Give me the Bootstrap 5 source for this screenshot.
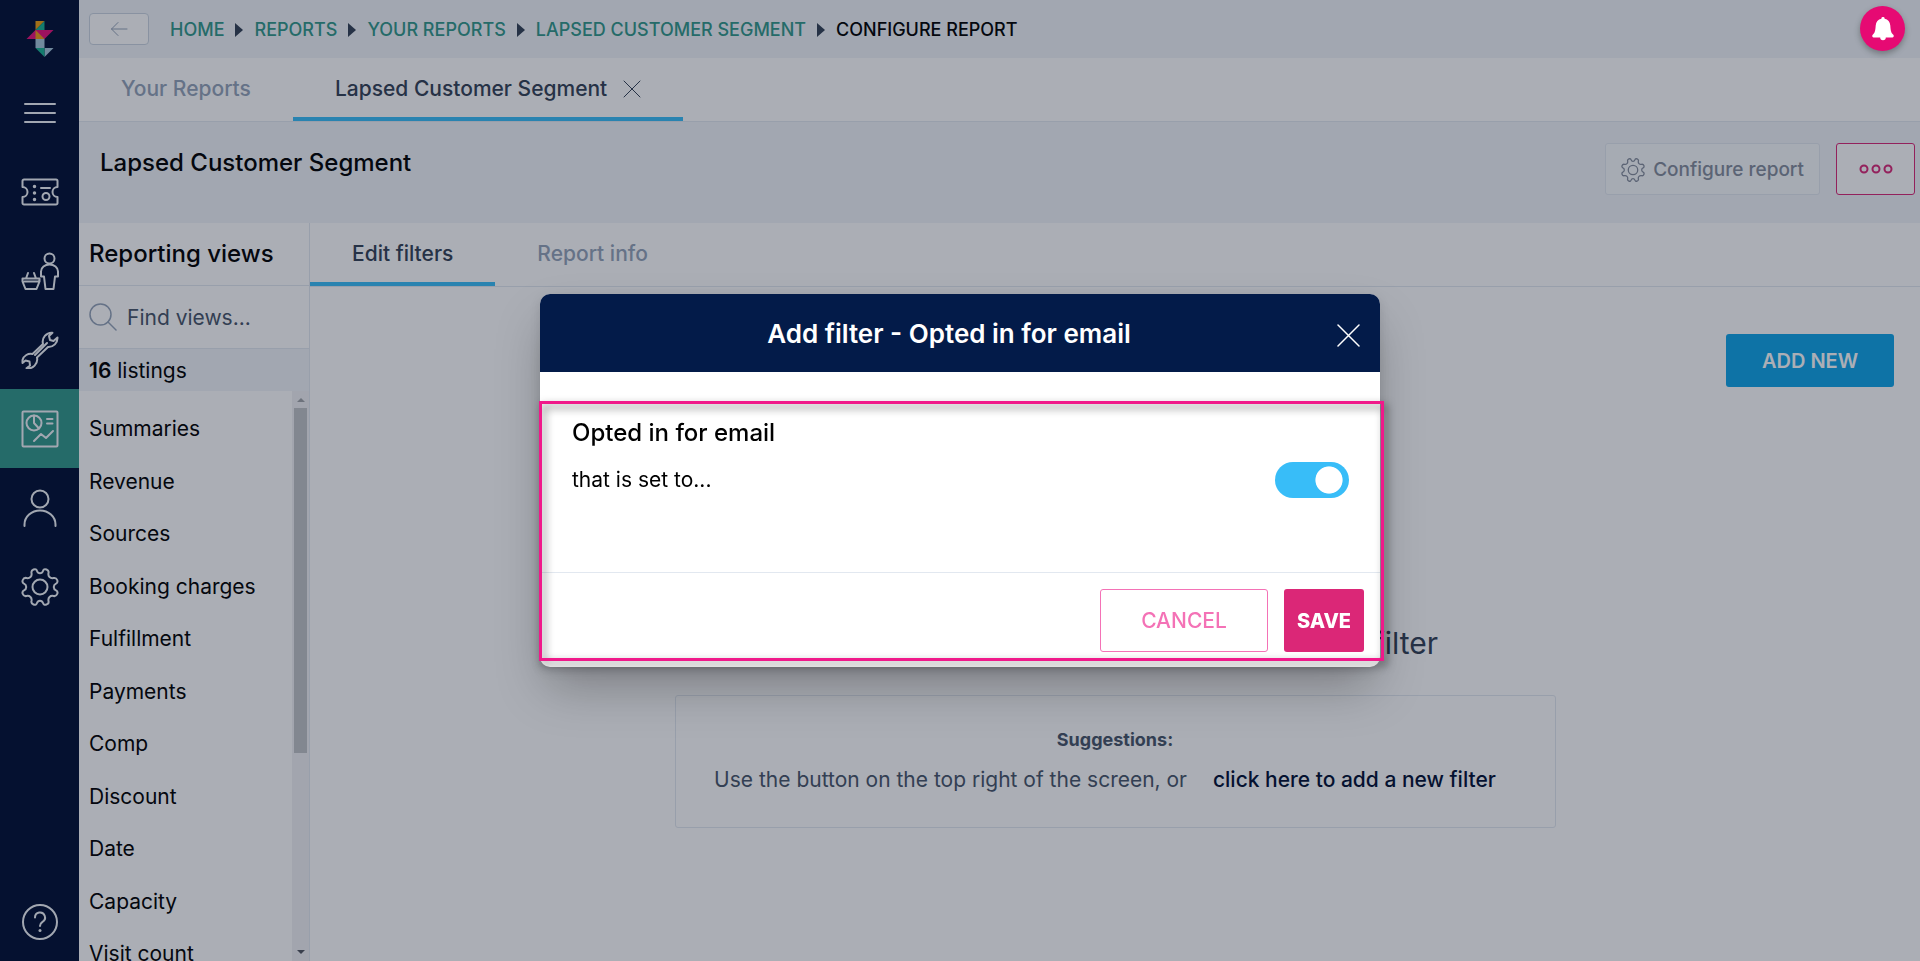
<!DOCTYPE html>
<html lang="en">
<head>
<meta charset="utf-8">
<meta name="viewport" content="width=device-width, initial-scale=1">
<title>Configure report</title>
<link href="https://cdn.jsdelivr.net/npm/bootstrap@5.3.0/dist/css/bootstrap.min.css" rel="stylesheet">
<style>
  :root {
    --navy: #000f33;
    --header-navy: #031b49;
    --green: #32988a;
    --sky: #38bdf8;
    --slate-100: #f1f5f9;
    --slate-200: #e2e8f0;
    --slate-400: #94a3b8;
    --slate-600: #475569;
    --slate-800: #334155;
    --pink: #db2777;
  }
  body { font-family: Inter, "Liberation Sans", sans-serif; font-size: 21px; line-height: 28px; color: #000; background: #fff; }
  a { text-decoration: none; color: inherit; }
  svg { display: block; flex: none; fill: none; stroke: currentColor; stroke-linecap: round; stroke-linejoin: round; }
  svg.solid { stroke: none; fill: currentColor; }
  h1, h2, h3, p, ul, ol { margin: 0; }
  .line-b { border-bottom: 1px solid var(--slate-200); }
  .title-text { font-size: 24px; line-height: 32px; font-weight: 500; }

  .rail { width: 79px; background: var(--navy); color: #f1f5f9; }
  .rail a, .rail button { height: 79px; width: 100%; color: inherit; background: none; border: 0; padding: 0; display: flex; align-items: center; justify-content: center; }
  .rail .brand-mark { height: 73px; padding-top: 4px; }
  .rail .current { background: var(--green); }

  .topbar { height: 58px; background: var(--slate-100); padding-left: 10px; }
  .back-btn { width: 60px; height: 32px; border: 1px solid #cbd5e1; border-radius: 4px; background: #fff; color: var(--slate-400); display: flex; align-items: center; justify-content: center; padding: 0; }
  .crumbs { font-size: 18px; font-weight: 500; color: var(--green); margin-left: 21px; padding: 2px 0 0; text-transform: uppercase; list-style: none; }
  .crumbs li + li::before { content: ""; display: block; margin: 0 11px; border: solid transparent; border-width: 7px 0 7px 8px; border-left-color: var(--slate-800); }
  .crumbs .here { color: #000; }

  .tabs { height: 64px; font-weight: 500; color: var(--slate-400); }
  .tabs .tab { display: flex; align-items: center; padding: 2px 42px 0; border-bottom: 4px solid transparent; }
  .tabs .tab.on { color: var(--slate-800); border-bottom-color: var(--sky); }
  .tabs button { background: none; border: 0; padding: 0; color: inherit; }

  .report-head { height: 101px; background: var(--slate-100); padding: 21px 5px 0 21px; }
  .head-btn { height: 52px; border-radius: 3px; font-size: 19px; font-weight: 500; }
  .config-btn { border: 1px solid var(--slate-200); background: #f8fafc; color: #848d9c; padding: 2px 15px 0; width: 215px; }
  .more-btn { width: 79px; border: 1px solid var(--pink); background: #fff; color: var(--pink); }

  .views { width: 231px; border-right: 1px solid var(--slate-200); }
  .views-title { height: 63px; padding-left: 10px; }
  .find { height: 63px; padding-left: 10px; color: var(--slate-400); }
  .find input { border: 0; outline: 0; width: 100%; padding: 2px 0 0; margin-left: 10px; background: none; color: var(--slate-600); }
  .find input::placeholder { color: var(--slate-600); opacity: 1; }
  .count { height: 42px; padding: 2px 0 0 10px; background: var(--slate-100); }
  .view-list { padding: 12px 0 0 10px; list-style: none; }
  .view-list li { height: 52px; display: flex; align-items: center; }
  .view-list li:nth-child(even) { height: 53px; }
  .scroll-track { width: 17px; background: #f1f2f4; padding: 7px 2px; gap: 6px; }
  .scroll-track::before, .scroll-track::after { content: ""; align-self: center; border: solid transparent; }
  .scroll-track::before { border-width: 0 4px 4px; border-bottom-color: #a0a3a8; }
  .scroll-track::after { border-width: 4px 4px 0; border-top-color: #505560; margin-top: auto; }
  .scroll-thumb { height: 62%; background: #c1c3c6; }

  .add-row { padding: 47px 26px 0; }
  .add-btn { width: 168px; height: 53px; background: #0ea5e9; color: #fff; border: 0; border-radius: 3px; font-size: 20px; font-weight: 600; }
  .empty-state { margin: auto 0 133px; }
  .empty-title { width: 646px; text-align: right; font-size: 30px; line-height: 40px; color: var(--slate-800); }
  .suggest { border: 1px solid var(--slate-200); border-radius: 3px; padding: 30px 34px 33px; color: var(--slate-600); min-width: 881px; }
  .suggest h3 { font-size: 18px; line-height: 28px; font-weight: 700; }
  .suggest a { color: var(--navy); font-weight: 500; margin: 0 20px; }

  .bell-btn { width: 45px; height: 45px; top: 6px; right: 15px; z-index: 1080; background: #e60a73; color: #fff; border: 0; border-radius: 50%; box-shadow: 0 3px 6px rgba(0,0,0,.3); display: flex; align-items: center; justify-content: center; padding: 0; }

  .modal-backdrop { --bs-backdrop-bg: #0f172a; --bs-backdrop-opacity: .35; }
  .filter-dialog { --bs-modal-width: 840px; }
  .filter-box { border: 0; border-radius: 10px; color: #000; box-shadow: 0 25px 50px -6px rgba(0,0,0,.28), 0 4px 12px rgba(0,0,0,.12); }
  .filter-head { height: 78px; background: var(--header-navy); color: #fff; border: 0; border-radius: 10px 10px 0 0; padding: 2px 42px 0 20px; justify-content: center; }
  .filter-head h2 { font-size: 26px; line-height: 32px; font-weight: 600; }
  .filter-head button { right: 20px; top: 30px; padding: 0; border: 0; background: none; color: #fff; }
  .filter-body { padding: 45px 31px 0 32px; height: 200px; }
  .optin-row { padding: 13px 0 0; }
  .form-switch .form-check-input.optin { width: 74px; height: 36px; border: 0; margin: 0; border-radius: 18px; background: radial-gradient(circle 14px at 54px 18px, #fff 94%, transparent) var(--sky); box-shadow: none; }
  .filter-foot { padding: 16px; height: 95px; border-top: 1px solid var(--slate-200); border-radius: 0; gap: 16px; align-items: flex-start; }
  .filter-foot button { height: 63px; border-radius: 3px; margin: 0; padding: 0; }
  .cancel-btn { width: 168px; border: 1px solid #f472b6; color: #f472b6; background: #fff; font-weight: 500; }
  .save-btn { width: 80px; border: 0; color: #fff; background: var(--pink); font-size: 20px; font-weight: 800; }
  .callout { inset: 107px -4px 6px -1px; border: 3px solid #f0198a; filter: drop-shadow(3px 4px 4px rgba(0,0,0,.55)); pointer-events: none; }
</style>
</head>
<body>
<div class="d-flex vh-100 overflow-hidden">

  <nav class="rail d-flex flex-column flex-shrink-0" aria-label="Main">
    <a class="brand-mark" href="#" aria-label="Dashboard">
      <svg class="solid" width="28" height="38" viewBox="0 0 28 38">
        <path fill="#f0a010" d="M9.500 1h9l-9 9z"/><path fill="#18b292" d="M18.500 1v9h-9z"/>
        <path fill="#e8107c" d="M9.500 10h18l-9 9h-18z"/><path fill="#f09a18" d="M9.500 10l9 9h-9z"/>
        <path fill="#a6c8dc" d="M9.500 19h9v9h-9zM18.500 28h9l-9 9z"/><path fill="#18b292" d="M9.500 28h9v9z"/>
      </svg>
    </a>
    <button type="button" aria-label="Menu"><svg width="34" height="24" viewBox="0 0 34 24" stroke-width="2"><path d="M2 3h30M2 12h30M2 21h30"/></svg></button>
    <a href="#" aria-label="Tickets"><svg width="38" height="28" viewBox="0 0 38 28" stroke-width="2"><path d="M3 1.500h32a1.500 1.500 0 0 1 1.500 1.500v6a5 5 0 0 0 0 10v6a1.500 1.500 0 0 1-1.500 1.500H3A1.500 1.500 0 0 1 1.500 25v-6a5 5 0 0 0 0-10V3A1.500 1.500 0 0 1 3 1.500zM20 10h9"/><circle cx="25" cy="18.500" r="3.500"/><path stroke-width="3.500" d="M13.500 8.500v0M13.500 15v0M13.500 21.500v0"/></svg></a>
    <a href="#" aria-label="Customers"><svg width="38" height="38" viewBox="0 0 38 38" stroke-width="2"><circle cx="28.500" cy="6.500" r="5"/><path d="M24.500 37l-1.500-12.500h-3v-5a8.500 7 0 0 1 17 0v5h-3L32.500 37zM3.500 29.500h14M1.500 26.500h17v3L15.500 37h-11l-3-7.500zM7 21l-2 5.500M13 21l2 5.500"/></svg></a>
    <a href="#" aria-label="Tools"><svg width="38" height="38" viewBox="0 0 38 38" stroke-width="2"><path d="M31.500 1.800A9 9 0 0 0 22 13L11.500 23A8.500 8.500 0 0 0 1.500 29v3l3-2.500 4 1 .5 4-3.500 2.700A9 9 0 0 0 16 26.500L27 16A9 9 0 0 0 36.500 6.500L32.500 10l-3.500-1-1-4zM14 24L26 12"/></svg></a>
    <a class="current" href="#" aria-label="Reports"><svg width="38" height="38" viewBox="0 0 38 38" stroke-width="2"><rect x="1.500" y="1.500" width="35" height="35" rx="1"/><circle cx="13" cy="13" r="7.500"/><path d="M13 5.500V13l5 5.500M26 9h5.500M26 13.500h5.500M13 31l7-7 5 4 7-7"/></svg></a>
    <a href="#" aria-label="People"><svg width="38" height="38" viewBox="0 0 38 38" stroke-width="2"><circle cx="19" cy="10" r="8.500"/><path d="M3.500 37v-1.500a15.500 14 0 0 1 31 0V37"/></svg></a>
    <a href="#" aria-label="Settings"><svg width="38" height="38" viewBox="0 0 38 38" stroke-width="2"><g id="cog"><circle cx="19" cy="19" r="7.500"/><path d="M12.500 1.500c2-.8 3 0 3.500 1.500 1 3 5 3 6 0 .5-1.500 1.500-2.300 3.500-1.500s2.500 1.700 2 3.500c-.7 3.200 1.800 5.700 5 5 1.800-.4 3 .2 3.700 2 .7 2 .3 3-1.200 3.700-3 1.300-3 5.300 0 6.600 1.500.7 2 1.700 1.200 3.700s-2 2.400-3.700 2c-3.200-.7-5.700 1.800-5 5 .4 1.800-.2 3-2 3.500-2 .8-3 0-3.500-1.500-1-3-5-3-6 0-.5 1.500-1.500 2.300-3.500 1.500s-2.500-1.700-2-3.500c.7-3.200-1.800-5.700-5-5-1.800.4-3 0-3.700-2-.8-2-.3-3 1.200-3.700 3-1.300 3-5.300 0-6.600-1.500-.7-2-1.700-1.200-3.700.7-1.800 2-2.400 3.700-2 3.200.7 5.700-1.800 5-5-.4-1.800.2-2.800 2-3.500z"/></g></svg></a>
    <a class="mt-auto" href="#" aria-label="Help"><svg width="38" height="38" viewBox="0 0 38 38" stroke-width="2"><circle cx="19" cy="19" r="17"/><path d="M14 14.500a5 5 0 1 1 7.500 4.300c-1.500 1-2.500 2-2.500 4.200"/><path stroke-width="3" d="M19 27.500v0"/></svg></a>
  </nav>

  <div class="d-flex flex-column flex-grow-1">
    <header class="topbar d-flex align-items-center flex-shrink-0">
      <button class="back-btn" type="button" aria-label="Back"><svg width="18" height="16" viewBox="0 0 18 16"><path d="M17 8H1.500M8 1.500L1.500 8 8 14.500"/></svg></button>
      <nav aria-label="Breadcrumb">
        <ol class="crumbs d-flex">
          <li class="d-flex align-items-center"><a href="#">Home</a></li>
          <li class="d-flex align-items-center"><a href="#">Reports</a></li>
          <li class="d-flex align-items-center"><a href="#">Your reports</a></li>
          <li class="d-flex align-items-center"><a href="#">Lapsed customer segment</a></li>
          <li class="d-flex align-items-center here" aria-current="page">Configure report</li>
        </ol>
      </nav>
    </header>

    <div class="tabs line-b d-flex flex-shrink-0">
      <a class="tab" href="#">Your Reports</a>
      <div class="tab on"><a href="#">Lapsed Customer Segment</a>
        <button class="ms-3" type="button" aria-label="Close tab"><svg width="18" height="18" viewBox="0 0 18 18"><path d="M1 1l16 16M17 1L1 17"/></svg></button>
      </div>
    </div>

    <section class="report-head d-flex justify-content-between align-items-start flex-shrink-0">
      <h1 class="title-text pt-1 mt-n1">Lapsed Customer Segment</h1>
      <div class="d-flex gap-3">
        <button class="head-btn config-btn d-flex align-items-center justify-content-between" type="button">
          <svg width="24" height="24" viewBox="0 0 38 38" stroke-width="2"><use href="#cog"/></svg>Configure report</button>
        <button class="head-btn more-btn d-flex align-items-center justify-content-center" type="button" aria-label="More actions"><svg width="34" height="10" viewBox="0 0 34 10" stroke-width="2"><circle cx="5" cy="5" r="3.500"/><circle cx="17" cy="5" r="3.500"/><circle cx="29" cy="5" r="3.500"/></svg></button>
      </div>
    </section>

    <div class="d-flex flex-grow-1 overflow-hidden">
      <aside class="views d-flex flex-column flex-shrink-0">
        <h2 class="title-text views-title line-b d-flex align-items-center flex-shrink-0">Reporting views</h2>
        <label class="find line-b d-flex align-items-center flex-shrink-0">
          <svg width="28" height="28" viewBox="0 0 28 28" stroke-width="1.500"><circle cx="11.500" cy="11.500" r="10.500"/><path d="M19 19l8 8"/></svg>
          <input type="search" placeholder="Find views..." aria-label="Find views">
        </label>
        <p class="count d-flex align-items-center flex-shrink-0"><span><b class="fw-semibold">16</b> listings</span></p>
        <div class="d-flex flex-grow-1 overflow-hidden">
          <ul class="view-list flex-grow-1">
            <li><a href="#">Summaries</a></li>
            <li><a href="#">Revenue</a></li>
            <li><a href="#">Sources</a></li>
            <li><a href="#">Booking charges</a></li>
            <li><a href="#">Fulfillment</a></li>
            <li><a href="#">Payments</a></li>
            <li><a href="#">Comp</a></li>
            <li><a href="#">Discount</a></li>
            <li><a href="#">Date</a></li>
            <li><a href="#">Capacity</a></li>
            <li><a href="#">Visit count</a></li>
          </ul>
          <div class="scroll-track d-flex flex-column"><div class="scroll-thumb"></div></div>
        </div>
      </aside>

      <main class="d-flex flex-column flex-grow-1">
        <div class="tabs line-b d-flex flex-shrink-0">
          <a class="tab on" href="#">Edit filters</a>
          <a class="tab" href="#">Report info</a>
        </div>
        <div class="add-row d-flex justify-content-end"><button class="add-btn" type="button">ADD NEW</button></div>
        <div class="empty-state d-flex flex-column align-items-center text-center">
          <h2 class="empty-title fw-normal mb-4 pb-2">filter</h2>
          <div class="suggest">
            <h3>Suggestions:</h3>
            <p class="pt-2 mt-1">Use the button on the top right of the screen, or <a href="#">click here to add a new filter</a></p>
          </div>
        </div>
      </main>
    </div>
  </div>
</div>

<button class="bell-btn position-fixed" type="button" aria-label="Notifications"><svg class="solid" width="22" height="26" viewBox="0 0 22 26"><path d="M11 1a1.600 1.600 0 0 1 1.600 1.800C16 3.500 18 6 18.300 9.500c.3 5 .8 7.500 3 9.300.8 1 .5 2.700-.8 2.700h-6.700a2.800 2.800 0 0 1-5.600 0H1.500c-1.300 0-1.600-1.700-.8-2.700 2.200-1.800 2.700-4.300 3-9.300C4 6 6 3.500 9.400 2.800A1.600 1.600 0 0 1 11 1z"/></svg></button>

<div class="modal-backdrop show"></div>
<div class="modal d-block" role="dialog" aria-modal="true" aria-labelledby="dialogTitle">
  <div class="modal-dialog modal-dialog-centered filter-dialog">
    <form class="modal-content filter-box">
      <div class="modal-header filter-head position-relative">
        <h2 id="dialogTitle">Add filter - Opted in for email</h2>
        <button class="position-absolute" type="button" aria-label="Close"><svg width="23" height="23" viewBox="0 0 23 23" stroke-width="1.500"><path d="M1 1l21 21M22 1L1 22"/></svg></button>
      </div>
      <div class="modal-body filter-body flex-grow-0">
        <h3 class="title-text">Opted in for email</h3>
        <div class="form-check form-switch optin-row d-flex justify-content-between align-items-center">
          <label for="optin">that is set to...</label>
          <input class="form-check-input optin" type="checkbox" role="switch" id="optin" checked>
        </div>
      </div>
      <div class="modal-footer filter-foot">
        <button class="cancel-btn" type="button">CANCEL</button>
        <button class="save-btn" type="submit">SAVE</button>
      </div>
      <div class="callout position-absolute"></div>
    </form>
  </div>
</div>
<script src="https://cdn.jsdelivr.net/npm/bootstrap@5.3.0/dist/js/bootstrap.bundle.min.js"></script>
</body>
</html>
